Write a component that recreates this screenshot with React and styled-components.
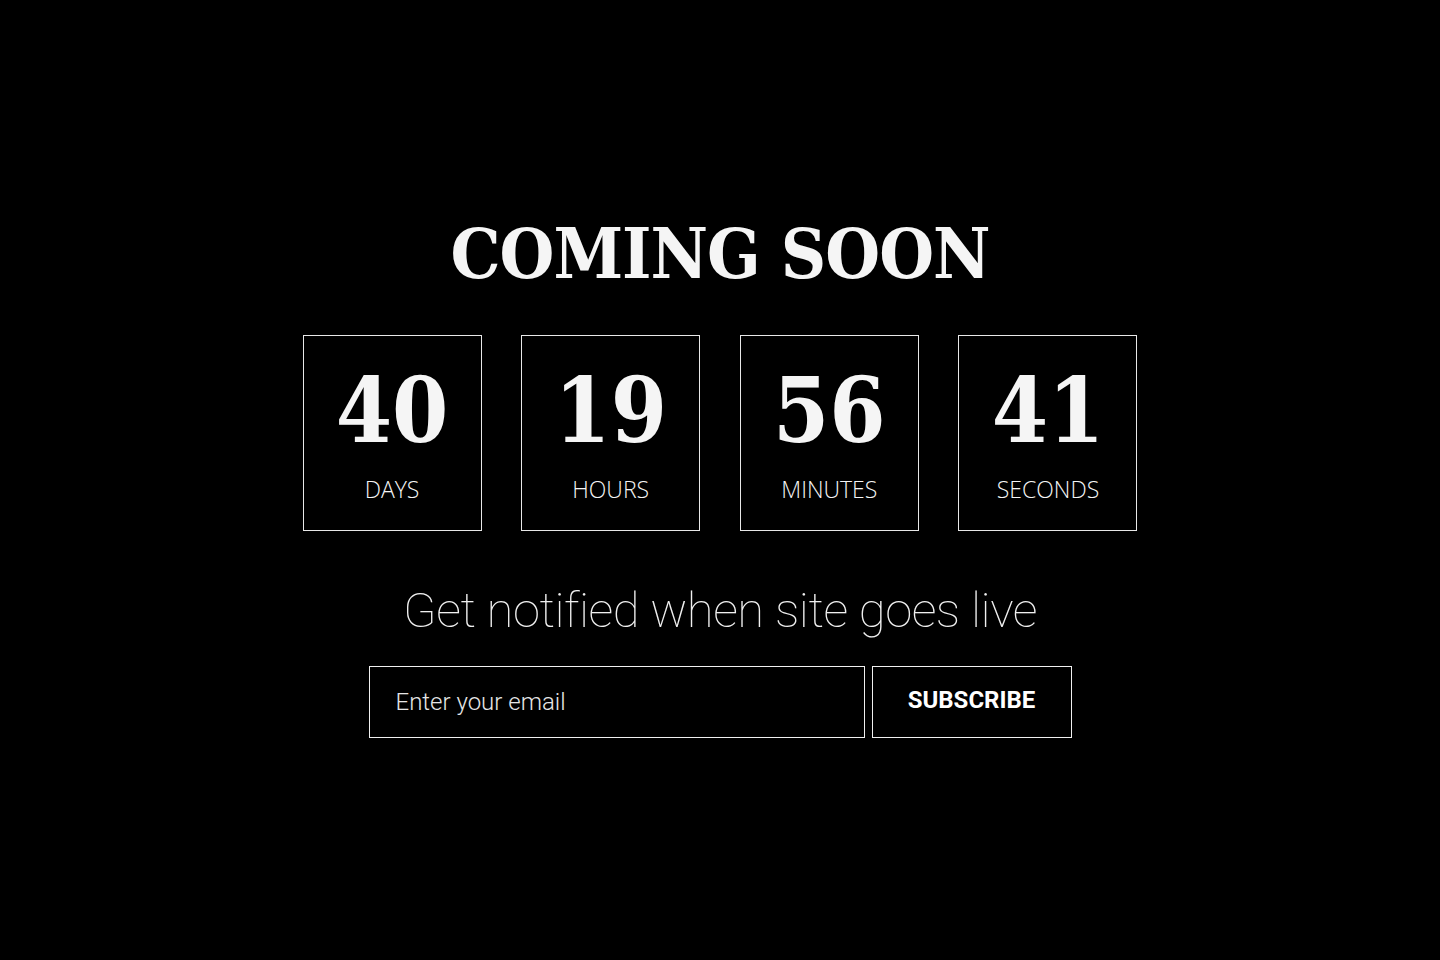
import React from "react";
import styled, { createGlobalStyle } from "styled-components";

const Global = createGlobalStyle`
  html, body { margin: 0; padding: 0; background: #000; }
  * { box-sizing: border-box; }
`;

const Page = styled.main`
  min-height: 100vh;
  background: #000;
  display: flex;
  flex-direction: column;
  align-items: center;
  justify-content: center;
  padding-bottom: 4px;
  color: #f5f5f5;
`;

const Title = styled.h1`
  margin: 0;
  font-family: "DejaVu Serif", serif;
  font-stretch: condensed;
  font-weight: 700;
  font-size: 70px;
  line-height: 1;
  letter-spacing: -1px;
  color: #f5f5f5;
`;

const Countdown = styled.div`
  margin-top: 46px;
  display: grid;
  grid-template-columns: repeat(4, 179px);
  column-gap: 39.67px;
`;

const Box = styled.div`
  height: 196px;
  border: 1px solid #e8e8e8;
  display: flex;
  flex-direction: column;
  align-items: center;
  padding-top: 29px;
`;

const Number = styled.div`
  font-family: "DejaVu Serif", serif;
  font-stretch: condensed;
  font-weight: 700;
  font-size: 90px;
  line-height: 1;
  color: #f5f5f5;
`;

const Label = styled.div`
  margin-top: 23px;
  font-family: "Open Sans", sans-serif;
  font-weight: 300;
  font-size: 23px;
  line-height: 1;
  text-transform: uppercase;
  color: #f5f5f5;
`;

const Tagline = styled.p`
  margin: 55px 0 0;
  font-family: Roboto, sans-serif;
  font-weight: 100;
  font-size: 49px;
  letter-spacing: -0.5px;
  line-height: 1;
  color: #f0f0f0;
`;

const Form = styled.form`
  margin-top: 31px;
  display: flex;
  gap: 7px;
`;

const EmailInput = styled.input`
  width: 496px;
  height: 72px;
  background: #000;
  border: 1px solid #f0f0f0;
  border-radius: 0;
  padding: 0 0 0 26px;
  font-family: Roboto, sans-serif;
  font-weight: 300;
  font-size: 24px;
  color: #f0f0f0;
  outline: none;
  &::placeholder { color: #e6e6e6; opacity: 1; }
`;

const Button = styled.button`
  width: 200px;
  height: 72px;
  background: #000;
  border: 1px solid #f0f0f0;
  border-radius: 0;
  font-family: Roboto, sans-serif;
  font-weight: 700;
  font-size: 24px;
  color: #fff;
  cursor: pointer;
  padding: 0 0 3px;
`;

const units = [
  { value: "40", label: "Days" },
  { value: "19", label: "Hours" },
  { value: "56", label: "Minutes" },
  { value: "41", label: "Seconds" },
];

export default function App() {
  return (
    <>
      <Global />
      <Page>
        <Title>COMING SOON</Title>
        <Countdown>
          {units.map((u) => (
            <Box key={u.label}>
              <Number>{u.value}</Number>
              <Label>{u.label}</Label>
            </Box>
          ))}
        </Countdown>
        <Tagline>Get notified when site goes live</Tagline>
        <Form onSubmit={(e) => e.preventDefault()}>
          <EmailInput type="email" placeholder="Enter your email" />
          <Button type="submit">SUBSCRIBE</Button>
        </Form>
      </Page>
    </>
  );
}
